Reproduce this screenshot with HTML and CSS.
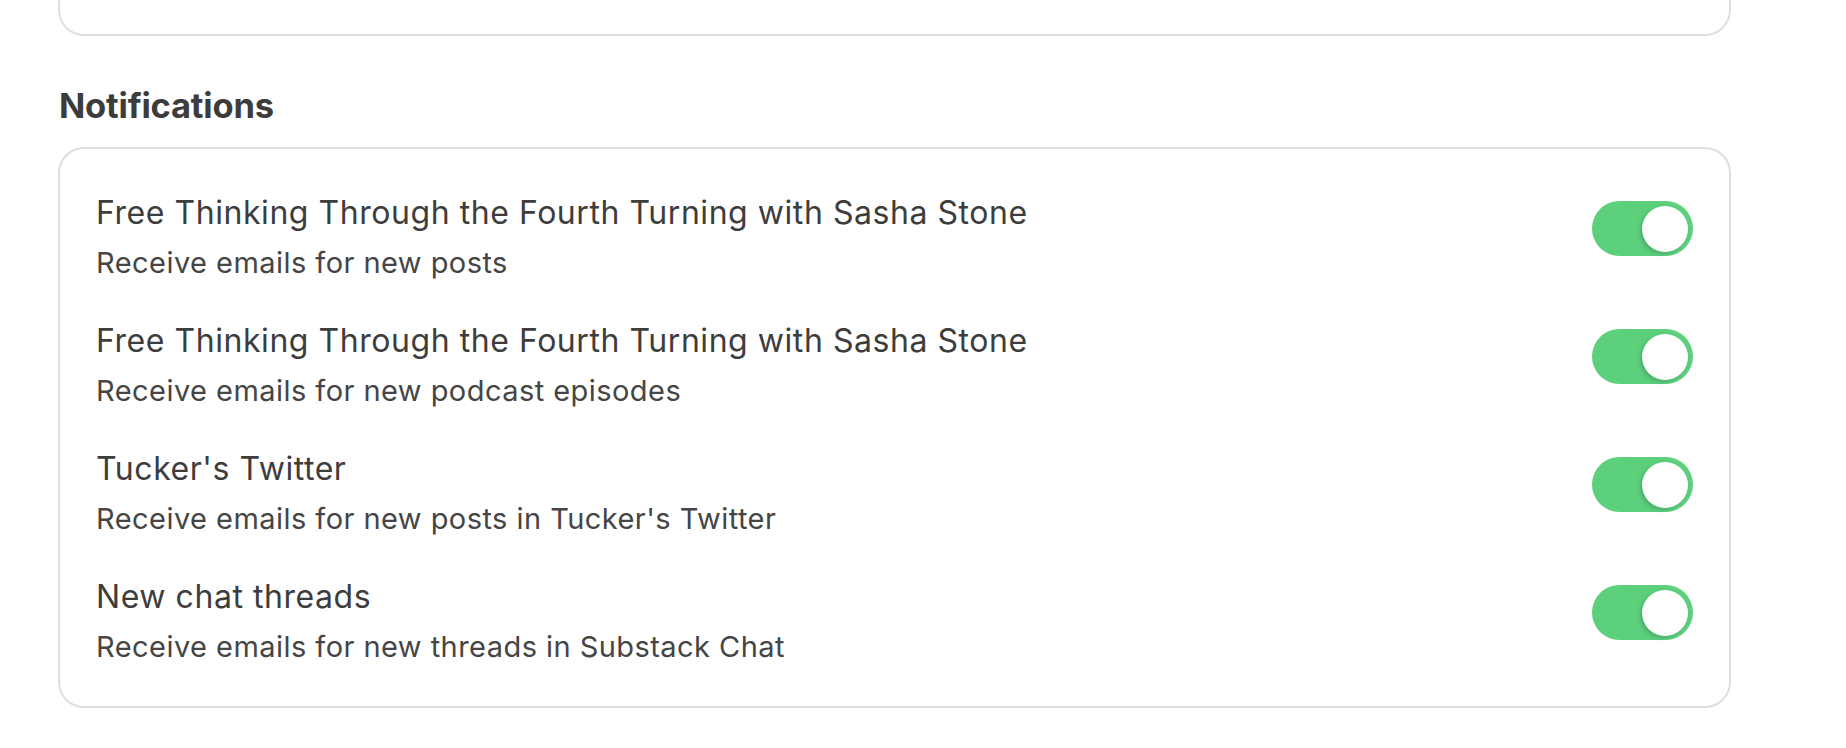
FILE: index.html
```html
<!DOCTYPE html>
<html lang="en">
<head>
<meta charset="utf-8">
<title>Notifications</title>
<link rel="stylesheet" href="styles.css">
</head>
<body>
<div class="page">
  <div class="card card-prev"></div>
  <h2 class="section-title">Notifications</h2>
  <div class="card card-list">
    <div class="row">
      <div class="row-text">
        <div class="row-title">Free Thinking Through the Fourth Turning with Sasha Stone</div>
        <div class="row-sub">Receive emails for new posts</div>
      </div>
      <div class="toggle on"><span class="knob"></span></div>
    </div>
    <div class="row">
      <div class="row-text">
        <div class="row-title">Free Thinking Through the Fourth Turning with Sasha Stone</div>
        <div class="row-sub">Receive emails for new podcast episodes</div>
      </div>
      <div class="toggle on"><span class="knob"></span></div>
    </div>
    <div class="row">
      <div class="row-text">
        <div class="row-title">Tucker's Twitter</div>
        <div class="row-sub">Receive emails for new posts in Tucker's Twitter</div>
      </div>
      <div class="toggle on"><span class="knob"></span></div>
    </div>
    <div class="row">
      <div class="row-text">
        <div class="row-title">New chat threads</div>
        <div class="row-sub">Receive emails for new threads in Substack Chat</div>
      </div>
      <div class="toggle on"><span class="knob"></span></div>
    </div>
  </div>
</div>
</body>
</html>
```

FILE: styles.css
```css
html, body {
  margin: 0;
  padding: 0;
  background: #ffffff;
}

body {
  font-family: Inter, "Liberation Sans", Arial, sans-serif;
  color: #3f3f3f;
  overflow: hidden;
}

.page {
  width: 1673px;
  margin-left: 58px;
  display: flex;
  flex-direction: column;
}

.card {
  box-sizing: border-box;
  border: 2px solid #dedede;
  background: #fff;
  border-radius: 26px;
}

.card-prev {
  height: 36px;
  border-top: none;
  border-radius: 0 0 26px 26px;
}

.section-title {
  margin: 49px 0 20px 1px;
  font-size: 34.5px;
  line-height: 42px;
  font-weight: 700;
  color: #3c3c3c;
  letter-spacing: -0.2px;
}

.card-list {
  padding: 44px 36px 39px 36px;
  display: flex;
  flex-direction: column;
  gap: 38px;
}

.row {
  display: flex;
  justify-content: space-between;
  align-items: flex-start;
}

.row-title {
  font-size: 32px;
  line-height: 40px;
  color: #3d3d3d;
  letter-spacing: 0.55px;
}

.row-sub {
  margin-top: 10px;
  font-size: 29px;
  line-height: 40px;
  color: #454545;
  letter-spacing: 0.45px;
}

.toggle {
  box-sizing: border-box;
  width: 101px;
  height: 55px;
  margin-top: 8px;
  border-radius: 28px;
  background: #5cd07d;
  display: flex;
  align-items: center;
  justify-content: flex-end;
  padding: 0 5px;
  flex-shrink: 0;
}

.knob {
  width: 46px;
  height: 46px;
  border-radius: 50%;
  background: #ffffff;
  box-shadow: -2px 2px 4px rgba(0, 0, 0, 0.18);
}
```
